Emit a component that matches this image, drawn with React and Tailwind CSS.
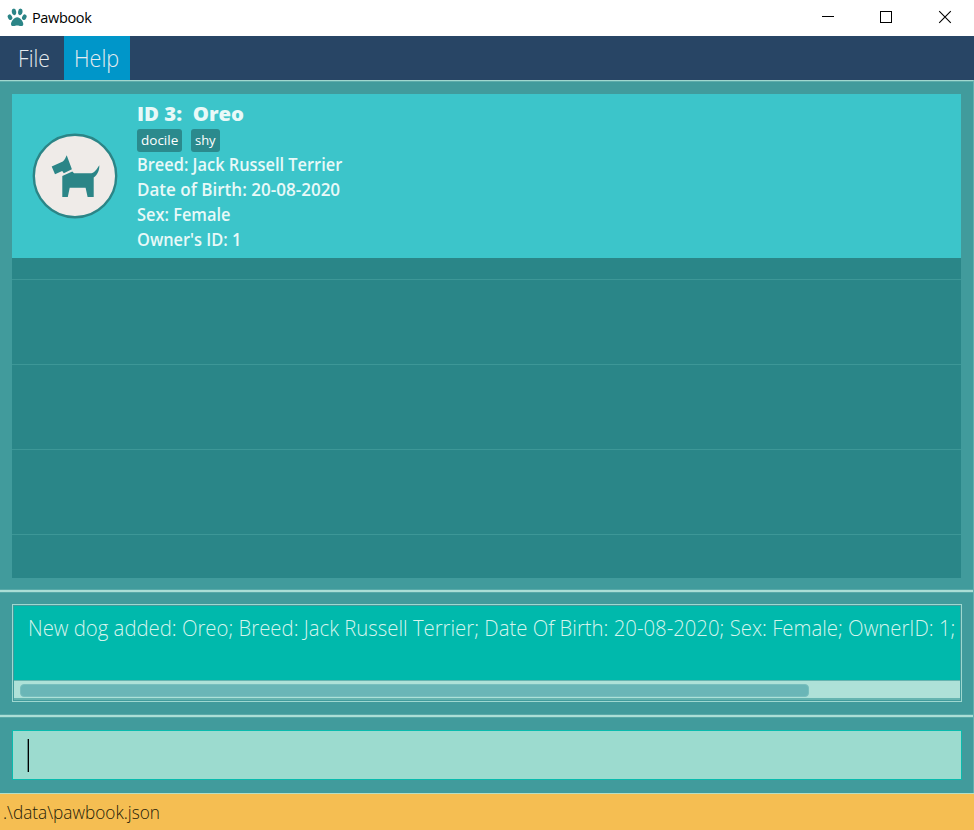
import React from "react";

const details = [
  { text: "Breed: Jack Russell Terrier", scale: "scale-x-[0.935]" },
  { text: "Date of Birth: 20-08-2020", scale: "scale-x-[0.973]" },
  { text: "Sex: Female", scale: "scale-x-[0.935]" },
  { text: "Owner's ID: 1", scale: "scale-x-[0.935]" },
];

function Paw() {
  return (
    <svg width="20" height="20" viewBox="0 0 20 20" fill="#2b8587" className="shrink-0">
      <ellipse cx="7" cy="3.9" rx="2.2" ry="3.3" transform="rotate(-8 7 3.9)" />
      <ellipse cx="13.3" cy="3.9" rx="2.2" ry="3.3" transform="rotate(8 13.3 3.9)" />
      <ellipse cx="3" cy="9.2" rx="2.1" ry="2.9" transform="rotate(-28 3 9.2)" />
      <ellipse cx="17.3" cy="9.2" rx="2.1" ry="2.9" transform="rotate(28 17.3 9.2)" />
      <path d="M10.200 9.200C7.200 9.200 4 13.500 4 15.900c0 1.600 1 2.300 2.400 2.200 1.500-.1 2.300-.7 3.800-.7s2.200.6 3.700.7c1.400.1 2.400-.6 2.400-2.200C16.300 13.500 13.200 9.200 10.200 9.200Z" />
    </svg>
  );
}

function DogBadge() {
  return (
    <svg width="88" height="88" viewBox="0 0 88 88" className="block">
      <circle cx="44" cy="44" r="41.2" fill="#efebe8" stroke="#2b8587" strokeWidth="2.4" />
      <g fill="#2b8587">
        <path d="M20.700 34.500 31.800 29.500C33.700 28 34.600 25.500 35.700 23.200L40.900 37.200 32.800 41.200 31.200 39 24 42.200Z" />
        <path d="M31.300 43.900 41.300 39.500 43 41.300H60.500C64.500 40.300 66 36.500 68.300 33.300 68.500 38.500 66.500 43 62.700 45.500V65H56.600L54.600 55.700H38.700L36.800 65H31.300Z" />
      </g>
    </svg>
  );
}

function Text({ children, className = "" }) {
  return <span className={"block w-max origin-left whitespace-pre " + className}>{children}</span>;
}

export default function App() {
  return (
    <div className="flex h-[830px] w-[974px] flex-col overflow-hidden bg-[#419b9c] font-['Open_Sans','Noto_Sans',sans-serif]">
      <header className="flex h-9 shrink-0 items-center bg-white pl-[7px]">
        <Paw />
        <Text className="ml-[5px] text-[14.500px] leading-5 tracking-[-0.350px] text-black">Pawbook</Text>
        <svg width="154" height="36" viewBox="0 0 154 36" fill="none" stroke="#000" className="ml-auto" shapeRendering="crispEdges">
          <path d="M2 16.500H14" />
          <rect x="60.500" y="11.500" width="11" height="11" />
          <path d="M119.200 11.200 130.800 22.800M130.800 11.200 119.200 22.800" shapeRendering="auto" strokeWidth="1.100" />
        </svg>
      </header>

      <nav className="flex h-11 shrink-0 bg-[#284565] text-[23px] font-light leading-[44px] text-[#e6ecf0]">
        <div className="w-16 pl-[18px]"><Text className="scale-x-[0.92]">File</Text></div>
        <div className="w-[66px] bg-[#0096c9] pl-[9.500px]"><Text className="scale-x-[0.940]">Help</Text></div>
      </nav>

      <main className="flex h-[713px] shrink-0 flex-col border-r border-t border-r-[#62b0af] border-t-[#a0d8cf]">
        <section className="h-[508px] shrink-0 border-t border-[#5eacaa] pl-3 pr-3 pt-3">
          <div className="h-[484px] w-[949px] bg-[#2a8688]">
            <article className="flex h-[164px] bg-[#3cc5ca]">
              <div className="pl-[19px] pt-[38px]"><DogBadge /></div>
              <div className="pl-[18px] pt-[7px] text-[#e9f9f8]">
                <Text className="scale-x-[1.100] text-[18.500px] font-extrabold leading-[25px]">ID 3:  Oreo</Text>
                <div className="mt-[3px] flex gap-[9px] text-[13.500px] font-medium leading-[23px] text-white">
                  <div className="h-[23px] w-[45px] rounded-[3px] bg-[#2b8a8d] pl-1"><Text>docile</Text></div>
                  <div className="h-[23px] w-[29px] rounded-[3px] bg-[#2b8a8d] pl-1"><Text className="scale-x-[0.960]">shy</Text></div>
                </div>
                {details.map((d) => (
                  <Text key={d.text} className={"h-[25px] text-[17.500px] font-semibold leading-[25px] " + d.scale}>{d.text}</Text>
                ))}
              </div>
            </article>
            <div className="h-[22px] border-b border-[#3d9797]" />
            <div className="h-[85px] border-b border-[#3d9797]" />
            <div className="h-[85px] border-b border-[#3d9797]" />
            <div className="h-[85px] border-b border-[#3d9797]" />
          </div>
        </section>

        <div className="h-1 shrink-0 border-y border-[#58a9a8] bg-[#abded6]" />

        <section className="h-[121px] shrink-0 px-3 pt-[11px]">
          <div className="h-[98px] w-[950px] border border-[#9fd8d0] p-px">
            <div className="h-[74px] w-[946px] bg-[#00b9ac] pl-[14px] pt-[6px]">
              <Text className="scale-x-[0.903] text-[22.500px] font-light leading-8 text-[#d5f4ed]">New dog added: Oreo; Breed: Jack Russell Terrier; Date Of Birth: 20-08-2020; Sex: Female; OwnerID: 1;</Text>
            </div>
            <div className="h-5 border-b-2 border-t border-[#65b4b0] bg-[#aee1d8] pl-1.5 pt-[3px]">
              <div className="h-[13px] w-[789px] rounded-[4px] border border-[#78bfbe] bg-[#6ab6b7]" />
            </div>
          </div>
        </section>

        <div className="h-1 shrink-0 border-y border-[#58a9a8] bg-[#abded6]" />

        <section className="px-3 pt-3">
          <div className="flex h-[50px] w-[950px] border border-[#0abbae] bg-[#9cdbcf] pl-[14px] pt-2">
            <div className="h-[33px] w-[2px] border-l border-[#5d8f88] bg-black" />
          </div>
        </section>
      </main>

      <footer className="h-[37px] shrink-0 border-t border-[#b5dfc5] bg-[#f5be52] pl-[3px] text-[18px] font-light leading-[37px] text-[#241b08]">
        <Text className="scale-x-[0.957]">.\data\pawbook.json</Text>
      </footer>
    </div>
  );
}
